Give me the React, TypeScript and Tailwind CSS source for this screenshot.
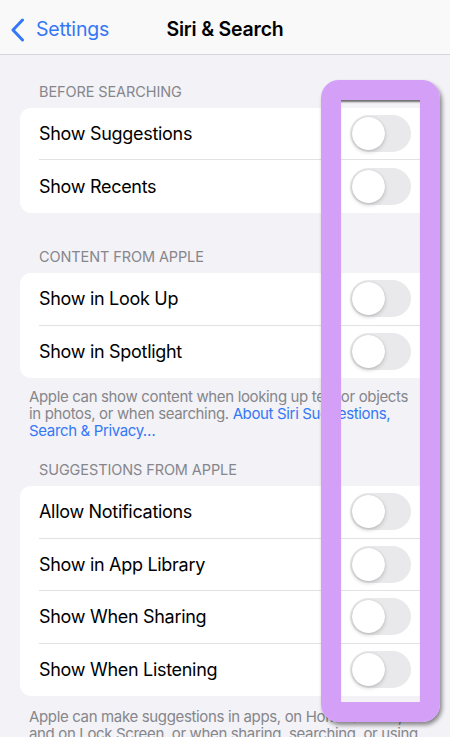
import React from "react";

const font = { fontFamily: "Inter, 'Noto Sans', sans-serif" };

function Toggle() {
  return (
    <div className="w-[61px] h-[37px] rounded-full bg-[#e9e9eb] p-[2px] flex items-center shrink-0">
      <div className="w-[33px] h-[33px] rounded-full bg-white shadow-[0_2px_4px_rgba(0,0,0,0.18),0_0_1px_rgba(0,0,0,0.2)]" />
    </div>
  );
}

function Row({ label, last }: { label: string; last?: boolean }) {
  return (
    <div className="h-[52.5px] pl-[19px] flex">
      <div
        className={
          "flex-1 flex items-center justify-between pr-[19px] " +
          (last ? "" : "border-b border-[#e2e2e5]")
        }
      >
        <span className="text-[18px] text-black tracking-[-0.3px]">{label}</span>
        <Toggle />
      </div>
    </div>
  );
}

function Header({ children }: { children: React.ReactNode }) {
  return (
    <div className="pl-[39px] text-[14.5px] text-[#86868b] uppercase leading-none tracking-[-0.1px]">
      {children}
    </div>
  );
}

export default function App() {
  return (
    <div className="relative w-[450px] h-[737px] overflow-hidden bg-[#f2f2f7]" style={font}>
      <div className="h-[55px] pt-[5px] bg-[#f9f9f9] border-b border-[#d6d6d8] relative flex items-center">
        <div className="flex items-center pl-[11px] text-[#3478f6]">
          <svg width="14" height="24" viewBox="0 0 14 24" fill="none">
            <path d="M11.5 2 L2 12 L11.5 22" stroke="#3478f6" strokeWidth="3" strokeLinecap="round" strokeLinejoin="round" />
          </svg>
          <span className="ml-[11px] text-[19.5px] tracking-[-0.2px]">Settings</span>
        </div>
        <div className="absolute left-0 right-0 text-center text-[19.5px] font-semibold text-black pointer-events-none tracking-[-0.2px]">
          Siri &amp; Search
        </div>
      </div>

      <div className="pt-[30px]">
        <Header>Before Searching</Header>
        <div className="mt-[8px] mx-[20px] bg-white rounded-[11px] overflow-hidden">
          <Row label="Show Suggestions" />
          <Row label="Show Recents" last />
        </div>

        <div className="mt-[37px]">
          <Header>Content from Apple</Header>
        </div>
        <div className="mt-[9px] mx-[20px] bg-white rounded-[11px] overflow-hidden">
          <Row label="Show in Look Up" />
          <Row label="Show in Spotlight" last />
        </div>
        <div className="mt-[9.5px] pl-[29px] pr-[36px] text-[15px] leading-[17px] text-[#86868b] tracking-[-0.35px]">
          Apple can show content when looking up text or objects in photos, or when searching.{" "}
          <span className="text-[#3478f6]">About Siri Suggestions, Search &amp; Privacy…</span>
        </div>

        <div className="mt-[24px]">
          <Header>Suggestions from Apple</Header>
        </div>
        <div className="mt-[9px] mx-[20px] bg-white rounded-[11px] overflow-hidden">
          <Row label="Allow Notifications" />
          <Row label="Show in App Library" />
          <Row label="Show When Sharing" />
          <Row label="Show When Listening" last />
        </div>
        <div className="mt-[11.5px] pl-[29px] pr-[20px] text-[15px] leading-[17px] text-[#86868b] tracking-[-0.35px]">
          Apple can make suggestions in apps, on Home Screen, and on Lock Screen, or when sharing, searching, or using Look Up and Keyboard.
        </div>
      </div>

      <div className="absolute left-[321px] top-[80px] w-[119px] h-[642px] rounded-[18px] border-[20px] border-[#d39ff7] shadow-[2px_3px_4px_rgba(0,0,0,0.45)] pointer-events-none">
        <div className="w-full h-full shadow-[inset_0_3px_2px_-1px_rgba(0,0,0,0.55)]" />
      </div>
    </div>
  );
}
